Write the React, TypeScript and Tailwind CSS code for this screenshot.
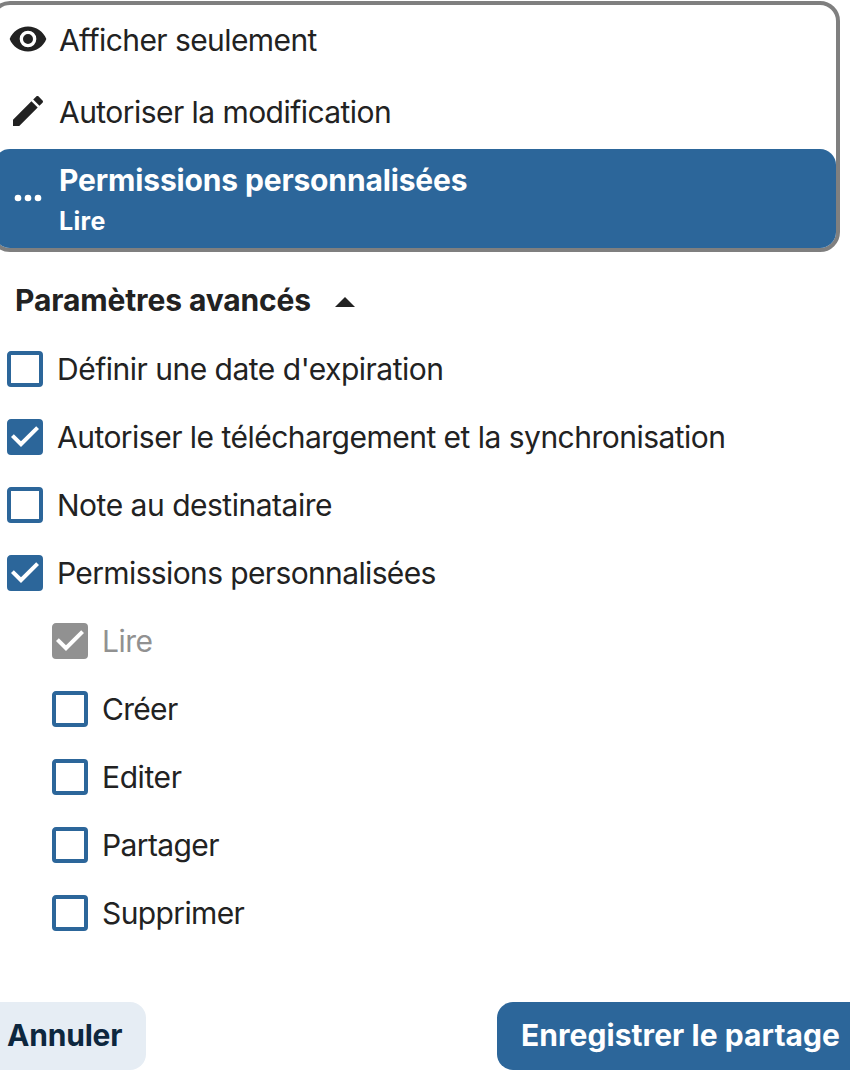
import { useState } from 'react';
import clsx from 'clsx';

type Option = {
  id: string;
  label: string;
  tracking: string;
  checked?: boolean;
  disabled?: boolean;
};

const SETTINGS: Option[] = [
  { id: 'expiration', label: "Définir une date d'expiration", tracking: 'tracking-[-0.5px]' },
  { id: 'download', label: 'Autoriser le téléchargement et la synchronisation', tracking: 'tracking-[-0.52px]', checked: true },
  { id: 'note', label: 'Note au destinataire', tracking: 'tracking-[-0.49px]' },
  { id: 'custom', label: 'Permissions personnalisées', tracking: 'tracking-[-0.63px]', checked: true },
];

const PERMISSIONS: Option[] = [
  { id: 'read', label: 'Lire', tracking: 'tracking-[-0.5px]', checked: true, disabled: true },
  { id: 'create', label: 'Créer', tracking: 'tracking-[-0.7px]' },
  { id: 'edit', label: 'Editer', tracking: 'tracking-[-0.4px]' },
  { id: 'share', label: 'Partager', tracking: 'tracking-[-0.6px]' },
  { id: 'delete', label: 'Supprimer', tracking: 'tracking-[-0.62px]' },
];

const EYE =
  'M12 9a3 3 0 0 0-3 3 3 3 0 0 0 3 3 3 3 0 0 0 3-3 3 3 0 0 0-3-3m0 8a5 5 0 0 1-5-5 5 5 0 0 1 5-5 5 5 0 0 1 5 5 5 5 0 0 1-5 5m0-12.500C7 4.500 2.730 7.610 1 12c1.730 4.390 6 7.500 11 7.500s9.270-3.110 11-7.500c-1.730-4.390-6-7.500-11-7.500';
const PENCIL =
  'M20.710 7.040c.390-.390.390-1.040 0-1.410l-2.340-2.340c-.370-.390-1.020-.390-1.410 0l-1.840 1.830 3.750 3.750M3 17.250V21h3.750L17.810 9.930l-3.750-3.750z';
const DOTS =
  'M16 12a2 2 0 0 1 2-2 2 2 0 0 1 2 2 2 2 0 0 1-2 2 2 2 0 0 1-2-2m-6 0a2 2 0 0 1 2-2 2 2 0 0 1 2 2 2 2 0 0 1-2 2 2 2 0 0 1-2-2m-6 0a2 2 0 0 1 2-2 2 2 0 0 1 2 2 2 2 0 0 1-2 2 2 2 0 0 1-2-2';
const MENU_UP = 'm7 15 5-5 5 5z';
const BOX_EMPTY =
  'M19 3H5c-1.110 0-2 .890-2 2v14a2 2 0 0 0 2 2h14a2 2 0 0 0 2-2V5a2 2 0 0 0-2-2m0 2v14H5V5z';
const BOX_CHECKED =
  'm10 17-5-5 1.410-1.420L10 14.170l7.590-7.590L19 8m0-5H5c-1.110 0-2 .890-2 2v14a2 2 0 0 0 2 2h14a2 2 0 0 0 2-2V5a2 2 0 0 0-2-2';

function Icon({ path, className }: { path: string; className?: string }) {
  return (
    <svg viewBox="0 0 24 24" fill="currentColor" className={clsx('shrink-0', className)}>
      <path d={path} />
    </svg>
  );
}

function CheckRow({ option, checked, onToggle }: { option: Option; checked: boolean; onToggle: () => void }) {
  return (
    <button
      type="button"
      role="checkbox"
      aria-checked={checked}
      disabled={option.disabled}
      onClick={onToggle}
      className={clsx('flex h-[68px] items-center gap-2 text-left', option.disabled && 'text-[#919191]')}
    >
      <Icon
        path={checked ? BOX_CHECKED : BOX_EMPTY}
        className={clsx('size-12', option.disabled ? 'text-[#919191]' : 'text-[#2c669a]')}
      />
      <span className={clsx('whitespace-nowrap', option.tracking)}>{option.label}</span>
    </button>
  );
}

export default function App() {
  const [checked, setChecked] = useState<string[]>(
    [...SETTINGS, ...PERMISSIONS].filter((o) => o.checked).map((o) => o.id)
  );

  const toggle = (id: string) => {
    setChecked((prev) => (prev.includes(id) ? prev.filter((c) => c !== id) : [...prev, id]));
  };

  return (
    <div className="h-[1072px] w-[850px] overflow-hidden bg-white pt-px font-['Inter',sans-serif] text-[30px] leading-10 text-[#222222]">
      <div className="-ml-2.5 w-[850px] rounded-[20px] border-4 border-[#7f7f7f]">
        <div className="flex h-[72px] items-center gap-[11px] pl-3.5">
          <Icon path={EYE} className="mb-1 size-10" />
          <span className="mb-0.5 tracking-[-0.58px]">Afficher seulement</span>
        </div>
        <div className="flex h-[72px] items-center gap-[11px] pl-3.5">
          <Icon path={PENCIL} className="mb-1 size-10" />
          <span className="mb-0.5 tracking-[-0.55px]">Autoriser la modification</span>
        </div>
        <div className="flex h-[99px] items-center gap-[11px] rounded-2xl bg-[#2c669a] pl-3.5 font-bold text-white">
          <Icon path={DOTS} className="mb-px size-10" />
          <div className="flex flex-col gap-px pt-[3px]">
            <span className="tracking-[-0.15px]">Permissions personnalisées</span>
            <span className="text-[25px] tracking-[0.3px]">Lire</span>
          </div>
        </div>
      </div>

      <button type="button" className="mt-[25px] ml-[15px] flex h-12 items-center gap-2.5 font-bold">
        <span className="mb-0.5 tracking-[-0.12px]">Paramètres avancés</span>
        <Icon path={MENU_UP} className="size-12" />
      </button>

      <div className="mt-[10px] flex flex-col pl-px">
        {SETTINGS.map((option) => (
          <CheckRow
            key={option.id}
            option={option}
            checked={checked.includes(option.id)}
            onToggle={() => toggle(option.id)}
          />
        ))}
        <div className="flex flex-col pl-[45px]">
          {PERMISSIONS.map((option) => (
            <CheckRow
              key={option.id}
              option={option}
              checked={checked.includes(option.id)}
              onToggle={() => toggle(option.id)}
            />
          ))}
        </div>
      </div>

      <div className="mt-[55px] -ml-4 flex w-[880px] justify-between font-bold">
        <button type="button" className="h-[68px] w-[162px] rounded-2xl bg-[#e6edf4] pb-0.5 pl-[23px] text-left text-[#0d273e]">
          <span className="tracking-[-0.2px]">Annuler</span>
        </button>
        <button type="button" className="h-[68px] w-[367px] rounded-2xl bg-[#2c669a] pb-0.5 pl-6 text-left whitespace-nowrap text-white">
          <span className="tracking-[0.06px]">Enregistrer le partage</span>
        </button>
      </div>
    </div>
  );
}
